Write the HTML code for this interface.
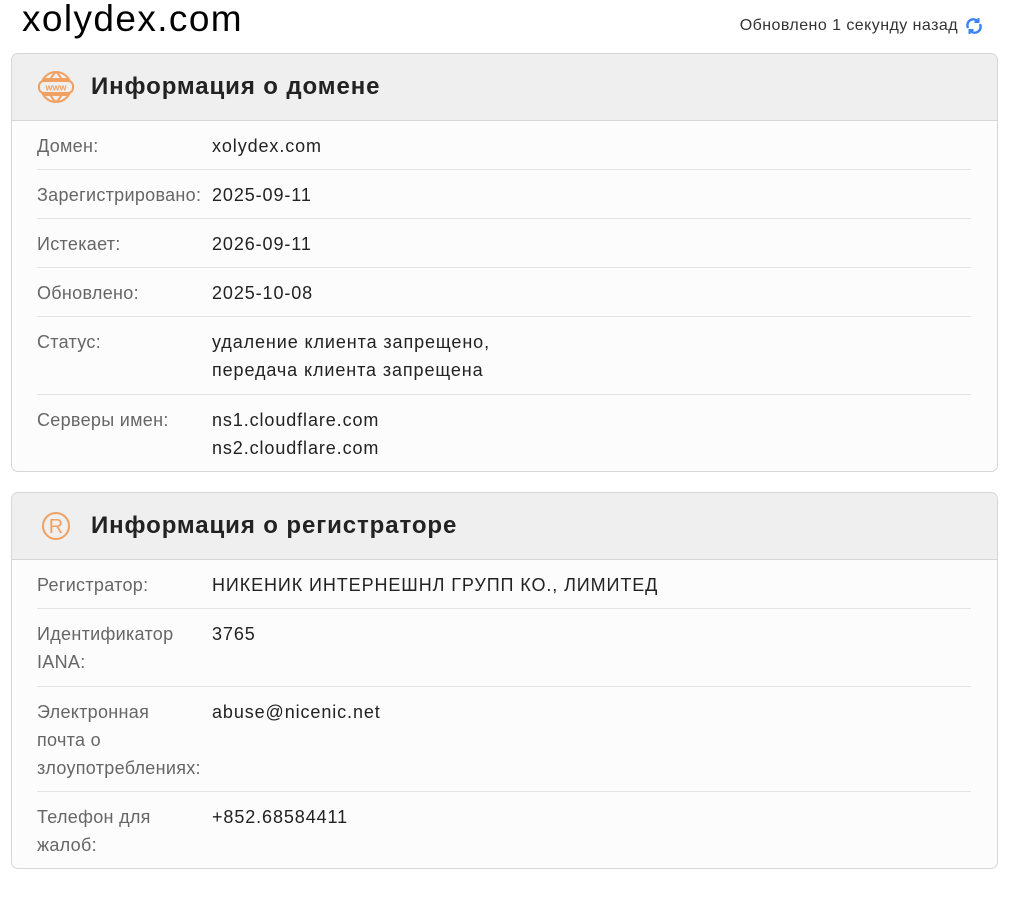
<!DOCTYPE html>
<html><head><meta charset="utf-8"><style>
*{box-sizing:border-box;margin:0;padding:0}
body{width:1014px;height:898px;background:#fff;font-family:"Liberation Sans","DejaVu Sans",sans-serif;color:#222;position:relative;overflow:hidden}
h1{position:absolute;left:22px;top:-2px;font-size:37px;font-weight:normal;color:#000;letter-spacing:1.4px}
.upd{position:absolute;right:30px;top:16px;font-size:16px;color:#333;display:flex;align-items:center;gap:6px;letter-spacing:0.45px}
.card{position:absolute;left:11px;width:987px;border:1px solid #d6d6d6;border-radius:7px;background:#fcfcfc;overflow:hidden}
.hd{height:67px;background:#efefef;border-bottom:1px solid #d6d6d6;display:flex;align-items:center;padding-left:26px}
.hd h2{font-size:24px;font-weight:bold;color:#222;margin-left:17px;letter-spacing:0.9px}
.row{margin:0 26px 0 25px;border-bottom:1px solid #e4e4e4;display:flex;padding-top:11px;font-size:18px;line-height:28px;letter-spacing:0.9px}
.row:last-child{border-bottom:none}
.l{width:175px;color:#666;flex:none;letter-spacing:0.3px}
.v{color:#222}
</style></head><body>
<h1>xolydex.com</h1>
<div class="upd">Обновлено 1 секунду назад
<svg width="20" height="20" viewBox="0 0 20 20" fill="none" stroke="#3b82f6" stroke-width="2.4"><path d="M4 12a6 6 0 0 1 10-6.5"/><path d="M16 8a6 6 0 0 1-10 6.5"/><path d="M14.5 2v4h-4" stroke-width="2"/><path d="M5.5 18v-4h4" stroke-width="2"/></svg></div>

<div class="card" style="top:53px;height:419px">
<div class="hd"><svg width="36" height="34" viewBox="0 0 36 34" fill="none" stroke="#f0a060" stroke-width="2"><circle cx="18" cy="17" r="15"/><path d="M18 2c-5 4-7 9-7 15s2 11 7 15M18 2c5 4 7 9 7 15s-2 11-7 15M5 9h26M5 25h26"/><rect x="1" y="11" width="34" height="12" rx="5" fill="#efefef"/><text x="18" y="20.5" text-anchor="middle" font-size="9" font-weight="bold" fill="#f0a060" stroke="none" font-family="Liberation Sans">www</text></svg><h2>Информация о домене</h2></div>
<div class="row" style="height:49px"><div class="l">Домен:</div><div class="v">xolydex.com</div></div>
<div class="row" style="height:49px"><div class="l">Зарегистрировано:</div><div class="v">2025-09-11</div></div>
<div class="row" style="height:49px"><div class="l">Истекает:</div><div class="v">2026-09-11</div></div>
<div class="row" style="height:49px"><div class="l">Обновлено:</div><div class="v">2025-10-08</div></div>
<div class="row" style="height:78px"><div class="l">Статус:</div><div class="v">удаление клиента запрещено,<br>передача клиента запрещена</div></div>
<div class="row" style="height:76px"><div class="l">Серверы имен:</div><div class="v">ns1.cloudflare.com<br>ns2.cloudflare.com</div></div>
</div>

<div class="card" style="top:492px;height:377px">
<div class="hd"><svg width="36" height="34" viewBox="0 0 36 34"><circle cx="18" cy="17" r="13" fill="none" stroke="#f0a060" stroke-width="2"/><text x="18" y="24" text-anchor="middle" font-size="20" fill="#f0a060" font-family="Liberation Sans">R</text></svg><h2>Информация о регистраторе</h2></div>
<div class="row" style="height:49px"><div class="l">Регистратор:</div><div class="v">НИКЕНИК ИНТЕРНЕШНЛ ГРУПП КО., ЛИМИТЕД</div></div>
<div class="row" style="height:78px"><div class="l">Идентификатор<br>IANA:</div><div class="v">3765</div></div>
<div class="row" style="height:105px"><div class="l">Электронная<br>почта о<br>злоупотреблениях:</div><div class="v">abuse@nicenic.net</div></div>
<div class="row" style="height:76px"><div class="l">Телефон для<br>жалоб:</div><div class="v">+852.68584411</div></div>
</div>
</body></html>
